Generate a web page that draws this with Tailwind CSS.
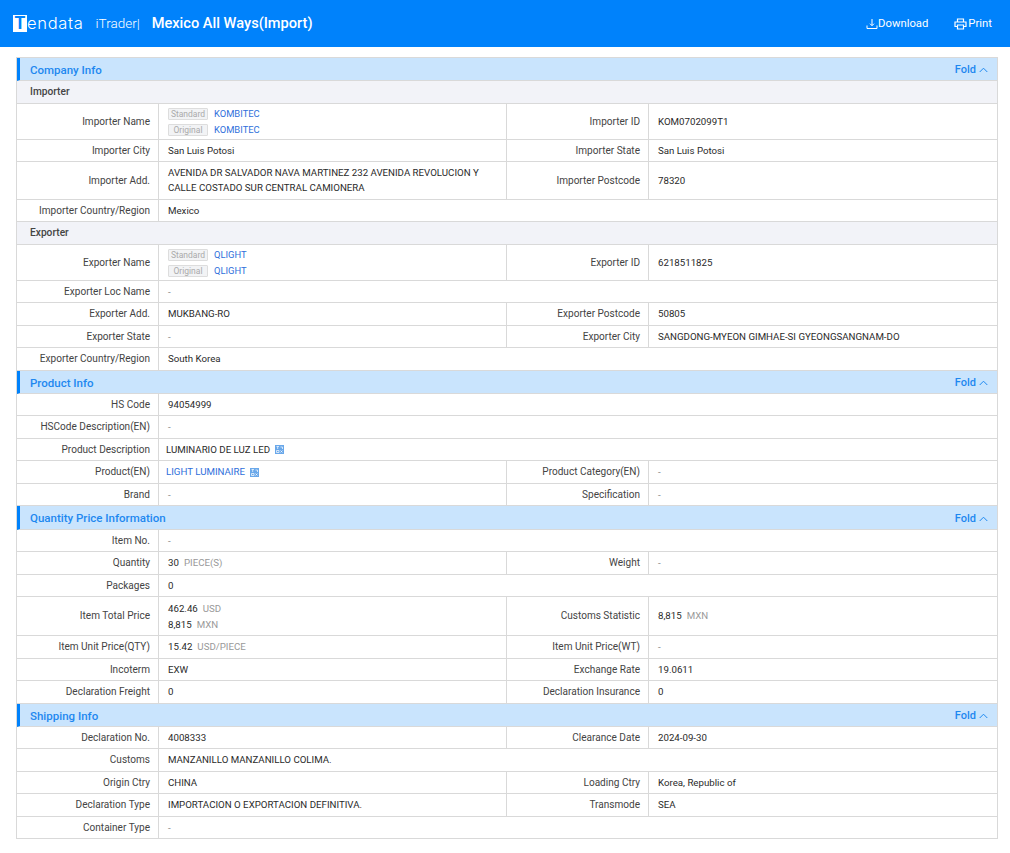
<!DOCTYPE html>
<html><head><meta charset="utf-8"><script src="https://cdn.jsdelivr.net/npm/@tailwindcss/browser@4"></script></head>
<body class="bg-white font-['Roboto',sans-serif] text-[#2a2a2a]">
<header class="h-[47px] bg-[#0082fb] flex items-center text-white pl-[13px] pr-[18px]">
<div class="flex items-center h-[17px] font-['Inter',sans-serif]"><span class="w-[14px] h-[17px] bg-white text-[#0082fb] font-bold text-[17px] leading-[17px] flex justify-center">T</span><span class="text-[16.5px] font-light tracking-[0.7px] leading-[17px]">endata</span></div>
<span class="ml-[12px] text-[13.5px] font-light">iTrader|</span>
<h1 class="ml-[12px] pt-[1px] text-[14.6px] font-medium">Mexico All Ways(Import)</h1>
<div class="ml-auto flex items-center text-[11.3px]">
<svg class="w-[12px] h-[12px]" viewBox="0 0 12 12" fill="none" stroke="white" stroke-width="1"><path d="M6 1v6.5M4 5.7 6 7.7 8 5.7M1 7.5v3h10v-3"/></svg><span class="pt-[1px]">Download</span>
<svg class="ml-[26px] w-[13px] h-[12px] mr-[1px]" viewBox="0 0 13 12" fill="none" stroke="white" stroke-width="1.2"><path d="M3.5 3.5V1h6v2.5M3 8.5H1V4h11v4.5H10M3.5 7h6v4h-6z"/></svg><span class="pt-[1px]">Print</span>
</div>
</header>
<main class="mx-[16px] mt-[10px] border border-[#d9d9d9] border-b-0 w-[982px] text-[9.7px] leading-[14px] [&>div.grid>div:nth-child(odd)]:text-[10.05px] [&>div.grid>div:nth-child(odd)]:text-[#444]">

<div class="h-[23px] bg-[#c9e4fd] border-l-[3px] border-l-[#0082fb] border-b border-[#d9d9d9] flex items-center pl-[10px] pr-[9px] text-[#1e88f0] text-[11.5px] font-medium"><span class="pt-[1px]">Company Info</span><span class="ml-auto flex items-center gap-[3px] text-[11px] pt-[2px]">Fold<svg class="w-[9px] h-[6px]" viewBox="0 0 9 6" fill="none" stroke="#1e88f0"><path d="M.7 5 4.5 1.2 8.3 5"/></svg></span></div>
<div class="h-[23px] bg-[#f2f3f8] border-b border-[#d9d9d9] flex items-center pl-[13px] font-medium text-[10.2px] text-[#444]">Importer</div>

<div class="grid grid-cols-[142px_348px_142px_1fr] border-b border-[#d9d9d9] h-[36px]">
<div class="flex items-center justify-end pr-[8px] border-r border-[#d9d9d9]">Importer Name</div>
<div class="pl-[9px] flex flex-col justify-center gap-[2px] border-r border-[#d9d9d9]">
<div class="flex items-center h-[14px]"><span class="w-[40px] h-[12px] rounded-[1px] bg-[#f2f3f5] border border-[#ddd] text-[#aaa] text-[8.5px] flex items-center justify-center mr-[6px]">Standard</span><span class="text-[#2f6fdb] text-[9.4px]">KOMBITEC</span></div>
<div class="flex items-center h-[14px]"><span class="w-[40px] h-[12px] rounded-[1px] bg-[#f2f3f5] border border-[#ddd] text-[#aaa] text-[8.5px] flex items-center justify-center mr-[6px]">Original</span><span class="text-[#2f6fdb] text-[9.4px]">KOMBITEC</span></div>
</div>
<div class="flex items-center justify-end pr-[8px] border-r border-[#d9d9d9]">Importer ID</div>
<div class="pl-[9px] flex items-center">KOM0702099T1</div>
</div>

<div class="grid grid-cols-[142px_348px_142px_1fr] border-b border-[#d9d9d9] h-[22px]">
<div class="flex items-center justify-end pr-[8px] border-r border-[#d9d9d9]">Importer City</div>
<div class="pl-[9px] flex items-center border-r border-[#d9d9d9]">San Luis Potosi</div>
<div class="flex items-center justify-end pr-[8px] border-r border-[#d9d9d9]">Importer State</div>
<div class="pl-[9px] flex items-center">San Luis Potosi</div>
</div>

<div class="grid grid-cols-[142px_348px_142px_1fr] border-b border-[#d9d9d9] h-[38px]">
<div class="flex items-center justify-end pr-[8px] border-r border-[#d9d9d9]">Importer Add.</div>
<div class="pl-[9px] pr-[20px] pb-[1px] flex items-center border-r border-[#d9d9d9] leading-[15px]">AVENIDA DR SALVADOR NAVA MARTINEZ 232 AVENIDA REVOLUCION Y CALLE COSTADO SUR CENTRAL CAMIONERA</div>
<div class="flex items-center justify-end pr-[8px] border-r border-[#d9d9d9]">Importer Postcode</div>
<div class="pl-[9px] flex items-center">78320</div>
</div>

<div class="grid grid-cols-[142px_1fr] border-b border-[#d9d9d9] h-[22px]">
<div class="flex items-center justify-end pr-[8px] border-r border-[#d9d9d9]">Importer Country/Region</div>
<div class="pl-[9px] flex items-center">Mexico</div>
</div>

<div class="h-[23px] bg-[#f2f3f8] border-b border-[#d9d9d9] flex items-center pl-[13px] font-medium text-[10.2px] text-[#444]">Exporter</div>

<div class="grid grid-cols-[142px_348px_142px_1fr] border-b border-[#d9d9d9] h-[36px]">
<div class="flex items-center justify-end pr-[8px] border-r border-[#d9d9d9]">Exporter Name</div>
<div class="pl-[9px] flex flex-col justify-center gap-[2px] border-r border-[#d9d9d9]">
<div class="flex items-center h-[14px]"><span class="w-[40px] h-[12px] rounded-[1px] bg-[#f2f3f5] border border-[#ddd] text-[#aaa] text-[8.5px] flex items-center justify-center mr-[6px]">Standard</span><span class="text-[#2f6fdb] text-[9.4px]">QLIGHT</span></div>
<div class="flex items-center h-[14px]"><span class="w-[40px] h-[12px] rounded-[1px] bg-[#f2f3f5] border border-[#ddd] text-[#aaa] text-[8.5px] flex items-center justify-center mr-[6px]">Original</span><span class="text-[#2f6fdb] text-[9.4px]">QLIGHT</span></div>
</div>
<div class="flex items-center justify-end pr-[8px] border-r border-[#d9d9d9]">Exporter ID</div>
<div class="pl-[9px] flex items-center">6218511825</div>
</div>

<div class="grid grid-cols-[142px_1fr] border-b border-[#d9d9d9] h-[22px]">
<div class="flex items-center justify-end pr-[8px] border-r border-[#d9d9d9]">Exporter Loc Name</div>
<div class="pl-[9px] flex items-center text-[#888]">-</div>
</div>

<div class="grid grid-cols-[142px_348px_142px_1fr] border-b border-[#d9d9d9] h-[23px]">
<div class="flex items-center justify-end pr-[8px] border-r border-[#d9d9d9]">Exporter Add.</div>
<div class="pl-[9px] flex items-center border-r border-[#d9d9d9]">MUKBANG-RO</div>
<div class="flex items-center justify-end pr-[8px] border-r border-[#d9d9d9]">Exporter Postcode</div>
<div class="pl-[9px] flex items-center">50805</div>
</div>

<div class="grid grid-cols-[142px_348px_142px_1fr] border-b border-[#d9d9d9] h-[22px]">
<div class="flex items-center justify-end pr-[8px] border-r border-[#d9d9d9]">Exporter State</div>
<div class="pl-[9px] flex items-center border-r border-[#d9d9d9] text-[#888]">-</div>
<div class="flex items-center justify-end pr-[8px] border-r border-[#d9d9d9]">Exporter City</div>
<div class="pl-[9px] flex items-center">SANGDONG-MYEON GIMHAE-SI GYEONGSANGNAM-DO</div>
</div>

<div class="grid grid-cols-[142px_1fr] border-b border-[#d9d9d9] h-[23px]">
<div class="flex items-center justify-end pr-[8px] border-r border-[#d9d9d9]">Exporter Country/Region</div>
<div class="pl-[9px] flex items-center">South Korea</div>
</div>

<div class="h-[23px] bg-[#c9e4fd] border-l-[3px] border-l-[#0082fb] border-b border-[#d9d9d9] flex items-center pl-[10px] pr-[9px] text-[#1e88f0] text-[11.5px] font-medium"><span class="pt-[1px]">Product Info</span><span class="ml-auto flex items-center gap-[3px] text-[11px] pt-[2px]">Fold<svg class="w-[9px] h-[6px]" viewBox="0 0 9 6" fill="none" stroke="#1e88f0"><path d="M.7 5 4.5 1.2 8.3 5"/></svg></span></div>

<div class="grid grid-cols-[142px_1fr] border-b border-[#d9d9d9] h-[22px]">
<div class="flex items-center justify-end pr-[8px] border-r border-[#d9d9d9]">HS Code</div>
<div class="pl-[9px] flex items-center">94054999</div>
</div>

<div class="grid grid-cols-[142px_1fr] border-b border-[#d9d9d9] h-[23px]">
<div class="flex items-center justify-end pr-[8px] border-r border-[#d9d9d9]">HSCode Description(EN)</div>
<div class="pl-[9px] flex items-center text-[#888]">-</div>
</div>

<div class="grid grid-cols-[142px_1fr] border-b border-[#d9d9d9] h-[22px]">
<div class="flex items-center justify-end pr-[8px] border-r border-[#d9d9d9]">Product Description</div>
<div class="pl-[7px] flex items-center">LUMINARIO DE LUZ LED<svg class="ml-[5px] w-[9px] h-[9px]" viewBox="0 0 9 9"><rect width="9" height="9" fill="#6aa8ea"/><path d="M1.5 1.5h2.5M2.7 1.5v2.5M5.5 2h2v2M1.5 5.5h2.5v2h-2.5zM5.5 5.5l2 2M7.5 5.5l-2 2" stroke="#fff" stroke-width=".7" fill="none"/></svg></div>
</div>

<div class="grid grid-cols-[142px_348px_142px_1fr] border-b border-[#d9d9d9] h-[23px]">
<div class="flex items-center justify-end pr-[8px] border-r border-[#d9d9d9]">Product(EN)</div>
<div class="pl-[7px] flex items-center border-r border-[#d9d9d9] text-[#2f6fdb]">LIGHT LUMINAIRE<svg class="ml-[5px] w-[9px] h-[9px]" viewBox="0 0 9 9"><rect width="9" height="9" fill="#6aa8ea"/><path d="M1.5 1.5h2.5M2.7 1.5v2.5M5.5 2h2v2M1.5 5.5h2.5v2h-2.5zM5.5 5.5l2 2M7.5 5.5l-2 2" stroke="#fff" stroke-width=".7" fill="none"/></svg></div>
<div class="flex items-center justify-end pr-[8px] border-r border-[#d9d9d9]">Product Category(EN)</div>
<div class="pl-[9px] flex items-center text-[#888]">-</div>
</div>

<div class="grid grid-cols-[142px_348px_142px_1fr] border-b border-[#d9d9d9] h-[22px]">
<div class="flex items-center justify-end pr-[8px] border-r border-[#d9d9d9]">Brand</div>
<div class="pl-[9px] flex items-center border-r border-[#d9d9d9] text-[#888]">-</div>
<div class="flex items-center justify-end pr-[8px] border-r border-[#d9d9d9]">Specification</div>
<div class="pl-[9px] flex items-center text-[#888]">-</div>
</div>

<div class="h-[24px] bg-[#c9e4fd] border-l-[3px] border-l-[#0082fb] border-b border-[#d9d9d9] flex items-center pl-[10px] pr-[9px] text-[#1e88f0] text-[11.5px] font-medium"><span class="pt-[1px]">Quantity Price Information</span><span class="ml-auto flex items-center gap-[3px] text-[11px] pt-[2px]">Fold<svg class="w-[9px] h-[6px]" viewBox="0 0 9 6" fill="none" stroke="#1e88f0"><path d="M.7 5 4.5 1.2 8.3 5"/></svg></span></div>

<div class="grid grid-cols-[142px_1fr] border-b border-[#d9d9d9] h-[22px]">
<div class="flex items-center justify-end pr-[8px] border-r border-[#d9d9d9]">Item No.</div>
<div class="pl-[9px] flex items-center text-[#888]">-</div>
</div>

<div class="grid grid-cols-[142px_348px_142px_1fr] border-b border-[#d9d9d9] h-[23px]">
<div class="flex items-center justify-end pr-[8px] border-r border-[#d9d9d9]">Quantity</div>
<div class="pl-[9px] flex items-center border-r border-[#d9d9d9]">30<span class="ml-[5px] text-[#999]">PIECE(S)</span></div>
<div class="flex items-center justify-end pr-[8px] border-r border-[#d9d9d9]">Weight</div>
<div class="pl-[9px] flex items-center text-[#888]">-</div>
</div>

<div class="grid grid-cols-[142px_1fr] border-b border-[#d9d9d9] h-[22px]">
<div class="flex items-center justify-end pr-[8px] border-r border-[#d9d9d9]">Packages</div>
<div class="pl-[9px] flex items-center">0</div>
</div>

<div class="grid grid-cols-[142px_348px_142px_1fr] border-b border-[#d9d9d9] h-[39px]">
<div class="flex items-center justify-end pr-[8px] border-r border-[#d9d9d9]">Item Total Price</div>
<div class="pl-[9px] pt-[1px] flex flex-col justify-center border-r border-[#d9d9d9] leading-[16px]"><div>462.46<span class="ml-[5px] text-[#999]">USD</span></div><div>8,815<span class="ml-[5px] text-[#999]">MXN</span></div></div>
<div class="flex items-center justify-end pr-[8px] border-r border-[#d9d9d9]">Customs Statistic</div>
<div class="pl-[9px] flex items-center">8,815<span class="ml-[5px] text-[#999]">MXN</span></div>
</div>

<div class="grid grid-cols-[142px_348px_142px_1fr] border-b border-[#d9d9d9] h-[23px]">
<div class="flex items-center justify-end pr-[8px] border-r border-[#d9d9d9]">Item Unit Price(QTY)</div>
<div class="pl-[9px] flex items-center border-r border-[#d9d9d9]">15.42<span class="ml-[5px] text-[#999]">USD/PIECE</span></div>
<div class="flex items-center justify-end pr-[8px] border-r border-[#d9d9d9]">Item Unit Price(WT)</div>
<div class="pl-[9px] flex items-center text-[#888]">-</div>
</div>

<div class="grid grid-cols-[142px_348px_142px_1fr] border-b border-[#d9d9d9] h-[22px]">
<div class="flex items-center justify-end pr-[8px] border-r border-[#d9d9d9]">Incoterm</div>
<div class="pl-[9px] flex items-center border-r border-[#d9d9d9]">EXW</div>
<div class="flex items-center justify-end pr-[8px] border-r border-[#d9d9d9]">Exchange Rate</div>
<div class="pl-[9px] flex items-center">19.0611</div>
</div>

<div class="grid grid-cols-[142px_348px_142px_1fr] border-b border-[#d9d9d9] h-[23px]">
<div class="flex items-center justify-end pr-[8px] border-r border-[#d9d9d9]">Declaration Freight</div>
<div class="pl-[9px] flex items-center border-r border-[#d9d9d9]">0</div>
<div class="flex items-center justify-end pr-[8px] border-r border-[#d9d9d9]">Declaration Insurance</div>
<div class="pl-[9px] flex items-center">0</div>
</div>

<div class="h-[23px] bg-[#c9e4fd] border-l-[3px] border-l-[#0082fb] border-b border-[#d9d9d9] flex items-center pl-[10px] pr-[9px] text-[#1e88f0] text-[11.5px] font-medium"><span class="pt-[1px]">Shipping Info</span><span class="ml-auto flex items-center gap-[3px] text-[11px] pt-[2px]">Fold<svg class="w-[9px] h-[6px]" viewBox="0 0 9 6" fill="none" stroke="#1e88f0"><path d="M.7 5 4.5 1.2 8.3 5"/></svg></span></div>

<div class="grid grid-cols-[142px_348px_142px_1fr] border-b border-[#d9d9d9] h-[22px]">
<div class="flex items-center justify-end pr-[8px] border-r border-[#d9d9d9]">Declaration No.</div>
<div class="pl-[9px] flex items-center border-r border-[#d9d9d9]">4008333</div>
<div class="flex items-center justify-end pr-[8px] border-r border-[#d9d9d9]">Clearance Date</div>
<div class="pl-[9px] flex items-center">2024-09-30</div>
</div>

<div class="grid grid-cols-[142px_1fr] border-b border-[#d9d9d9] h-[23px]">
<div class="flex items-center justify-end pr-[8px] border-r border-[#d9d9d9]">Customs</div>
<div class="pl-[9px] flex items-center">MANZANILLO MANZANILLO COLIMA.</div>
</div>

<div class="grid grid-cols-[142px_348px_142px_1fr] border-b border-[#d9d9d9] h-[22px]">
<div class="flex items-center justify-end pr-[8px] border-r border-[#d9d9d9]">Origin Ctry</div>
<div class="pl-[9px] flex items-center border-r border-[#d9d9d9]">CHINA</div>
<div class="flex items-center justify-end pr-[8px] border-r border-[#d9d9d9]">Loading Ctry</div>
<div class="pl-[9px] flex items-center">Korea, Republic of</div>
</div>

<div class="grid grid-cols-[142px_348px_142px_1fr] border-b border-[#d9d9d9] h-[23px]">
<div class="flex items-center justify-end pr-[8px] border-r border-[#d9d9d9]">Declaration Type</div>
<div class="pl-[9px] flex items-center border-r border-[#d9d9d9]">IMPORTACION O EXPORTACION DEFINITIVA.</div>
<div class="flex items-center justify-end pr-[8px] border-r border-[#d9d9d9]">Transmode</div>
<div class="pl-[9px] flex items-center">SEA</div>
</div>

<div class="grid grid-cols-[142px_1fr] border-b border-[#d9d9d9] h-[22px]">
<div class="flex items-center justify-end pr-[8px] border-r border-[#d9d9d9]">Container Type</div>
<div class="pl-[9px] flex items-center text-[#888]">-</div>
</div>

</main>
</body></html>
